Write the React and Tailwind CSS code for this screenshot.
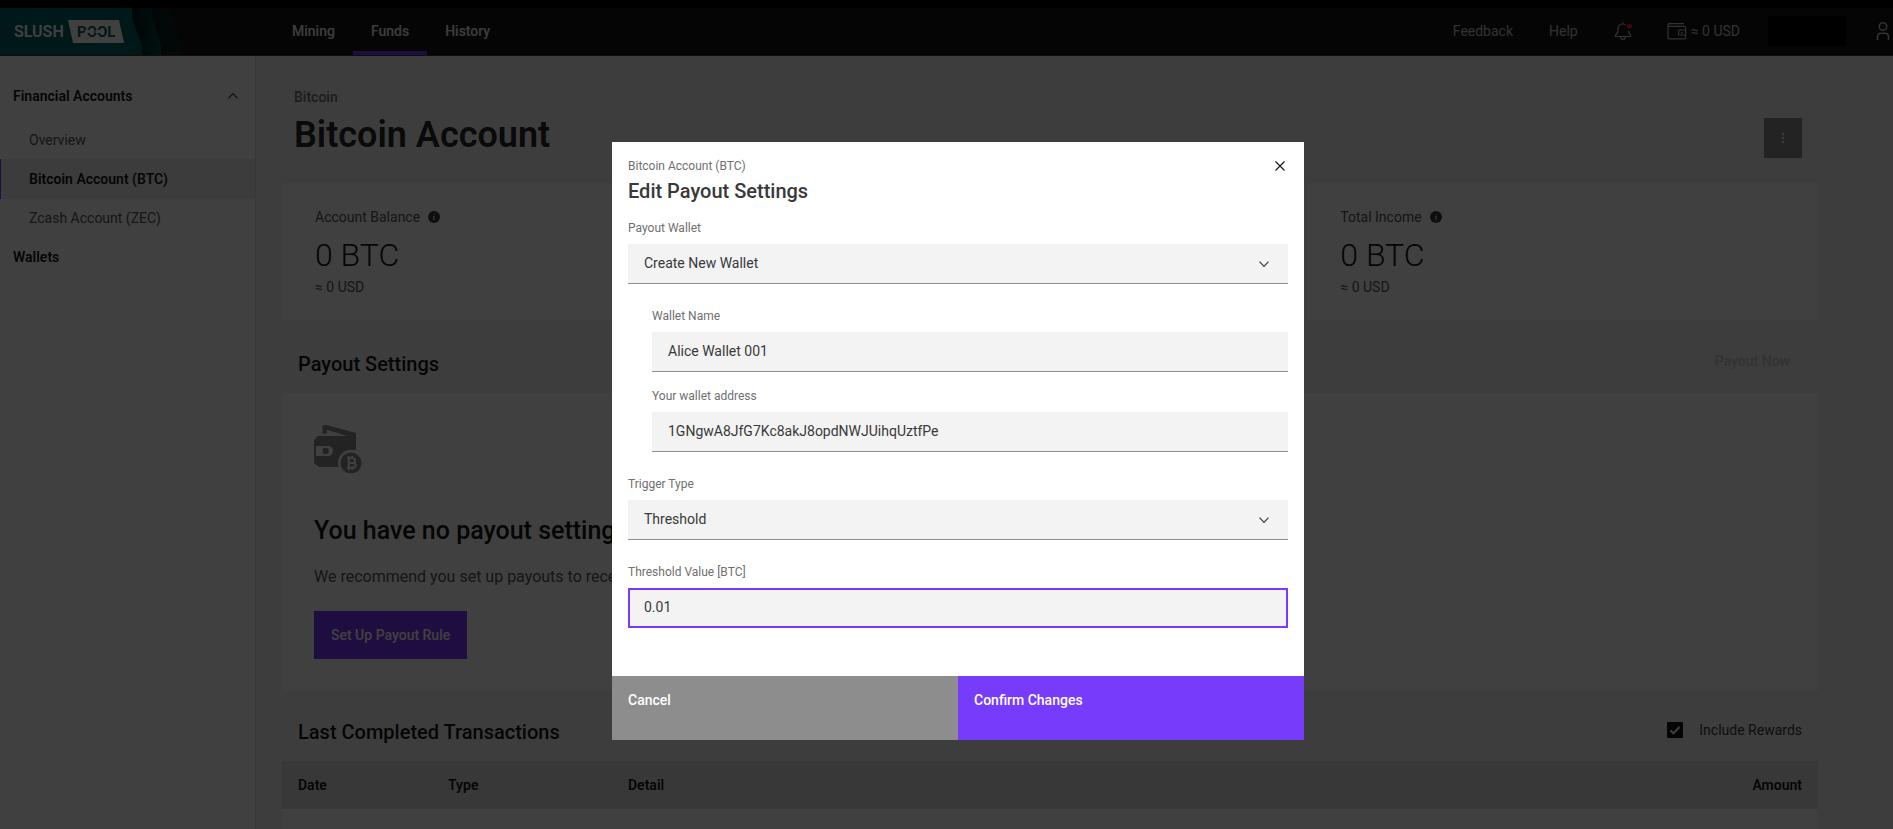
import React from "react";

function Logo() {
  return (
    <svg viewBox="0 0 182 47" className="h-[47px] w-[182px] shrink-0" role="img" aria-label="Slush Pool">
      <defs>
        <linearGradient id="fold1" x1="0" x2="1" y1="0" y2="0">
          <stop offset="0.2" stopColor="#001c1c" />
          <stop offset="1" stopColor="#004a48" />
        </linearGradient>
        <linearGradient id="fold2" x1="0" x2="1" y1="0" y2="0">
          <stop offset="0.3" stopColor="#0c1414" />
          <stop offset="1" stopColor="#062827" />
        </linearGradient>
      </defs>
      <path d="M130 0H171V10L181 40V47H130Z" fill="url(#fold2)" />
      <path d="M130 0H152V10L161 38V47H130Z" fill="url(#fold1)" />
      <path d="M0 0H132V10L142 38V47H0Z" fill="#00605c" />
      <path d="M68 12H119L124 35H73Z" fill="#ffffff" />
      <text x="14" y="29" fill="#ffffff" fontSize="16" fontWeight="600" fontFamily="Roboto, sans-serif">SLUSH</text>
      <text x="77" y="29" fill="#00605c" fontSize="15" fontWeight="700" fontFamily="Roboto, sans-serif">POOL</text>
      <path d="M85 22H90V25H85ZM95.500 22H100.500V25H95.500Z" fill="#ffffff" />
    </svg>
  );
}

function BellIcon() {
  return (
    <svg viewBox="0 0 18 20" className="h-5 w-[18px]" fill="none" stroke="#c6c6c6" strokeWidth="1.200">
      <path d="M9 1.500V3M11.500 3.700C10.700 3.200 9.800 3 9 3C6 3 4 5.200 4 8.200V11L1.500 14V15.500H16.500V14L14.600 11.500V9.500" />
      <path d="M6.500 15.800C6.700 17.300 7.700 18.300 9 18.300C10.300 18.300 11.300 17.300 11.500 15.800" />
      <circle cx="15.500" cy="5.200" r="2.500" fill="#e0302e" stroke="none" />
    </svg>
  );
}

function HeaderWalletIcon() {
  return (
    <svg viewBox="0 0 20 18" className="h-[18px] w-5" fill="none" stroke="#c6c6c6" strokeWidth="1.200">
      <path d="M17 1.600H2.500C1.600 1.600 1 2.200 1 3V15.500C1 16.200 1.500 16.800 2.300 16.800H17.500C18.200 16.800 18.600 16.400 18.600 15.700V5.500C18.600 4.800 18.200 4.400 17.500 4.400H1.500" />
      <path d="M18.600 8H12.500C12 8 11.600 8.400 11.600 9V12C11.600 12.600 12 13 12.500 13H18.600" />
      <rect x="14" y="10" width="1.500" height="1.500" fill="#c6c6c6" stroke="none" />
    </svg>
  );
}

function UserIcon() {
  return (
    <svg viewBox="0 0 16 20" className="h-5 w-4" fill="none" stroke="#c6c6c6" strokeWidth="1.500">
      <circle cx="8" cy="5.500" r="3.800" />
      <path d="M2.500 19V16C2.500 13.800 4 12.300 6 12.300H10C12 12.300 13.500 13.800 13.500 16V19" />
    </svg>
  );
}

function Chevron({ up = false, className = "" }) {
  return (
    <svg viewBox="0 0 12 8" className={"h-2 w-3 " + className} fill="none" stroke="#393939" strokeWidth="1.200" aria-hidden="true">
      <path d={up ? "M1.500 6.300L6 1.700L10.500 6.300" : "M1.500 1.700L6 6.300L10.500 1.700"} />
    </svg>
  );
}

function InfoIcon() {
  return (
    <svg viewBox="0 0 12 12" className="h-3 w-3" aria-hidden="true">
      <circle cx="6" cy="6" r="6" fill="#393939" />
      <path d="M6.200 3H7.200M5.200 5.300H6.300L5.600 8.700H6.600" stroke="#ffffff" strokeWidth="0.900" fill="none" />
    </svg>
  );
}

function PayoutWalletIcon() {
  return (
    <svg viewBox="0 0 48 48" className="h-12 w-12" fill="#8d8d8d" aria-hidden="true">
      <path d="M8.500 0H12.500L42 8V25.300A14 14 0 0 0 24 37.500C24 39 24.200 40.600 24.700 42H5L0 38V15L4 11H33L13 4.800V8.500H8.500Z" />
      <path d="M2 21H14A5 5 0 0 1 14 31H2Z" fill="#ffffff" />
      <circle cx="11.700" cy="26" r="3.200" />
      <circle cx="37" cy="38" r="13" fill="#ffffff" />
      <circle cx="37" cy="38" r="10.500" />
      <path d="M34.800 31V45M38.300 31V33.500M38.300 43V45M33 33.300H38.300C42 33.300 42 37.900 38.500 37.900H35M38.500 37.900C42.800 37.900 42.800 42.800 38.500 42.800H33" fill="none" stroke="#ffffff" strokeWidth="2" />
    </svg>
  );
}

const tabs = ["Mining", "Funds", "History"];

function Header() {
  return (
    <header className="flex h-12 items-stretch border-b border-[#393939] bg-[#171717] pr-[2px] text-sm font-medium">
      <a href="#home" className="mr-[92px]"><Logo /></a>
      <nav className="flex">
        {tabs.map((tab) => (
          <a
            key={tab}
            href={"#" + tab.toLowerCase()}
            className={
              tab === "Funds"
                ? "flex items-center border-b-4 border-[#773bfc] px-[18px] pt-[2px] text-[#f3f3f3]"
                : "flex items-center px-[18px] pb-[2px] text-[#f3f3f3]"
            }
          >
            {tab}
          </a>
        ))}
      </nav>
      <div className="ml-auto flex items-center pb-[2px] font-normal text-[#c6c6c6]">
        <a href="#feedback" className="mr-9">Feedback</a>
        <a href="#help" className="mr-9">Help</a>
        <button type="button" aria-label="Notifications" className="mr-[35px]"><BellIcon /></button>
        <a href="#wallet" className="mr-7 flex items-center gap-1"><HeaderWalletIcon />≈ 0 USD</a>
        <span className="mr-[29px] h-[30px] w-[78px] bg-black" />
        <button type="button" aria-label="User"><UserIcon /></button>
      </div>
    </header>
  );
}

function Sidebar() {
  return (
    <aside className="w-64 shrink-0 border-r border-[#e0e0e0] bg-white pt-4 text-sm">
      <button type="button" className="mx-[13px] flex h-12 w-[226px] items-center justify-between border-t border-[#f7f7f7] pb-[2px] font-semibold text-[#171717]">
        Financial Accounts
        <Chevron up />
      </button>
      <a href="#overview" className="flex h-[39px] items-center pl-[29px] text-[#565656]">Overview</a>
      <a href="#btc" className="flex h-10 items-center border-l border-[#773bfc] bg-[#f0f0f0] pl-7 font-semibold text-[#171717]">Bitcoin Account (BTC)</a>
      <a href="#zec" className="flex h-[38px] items-center pl-[29px] text-[#565656]">Zcash Account (ZEC)</a>
      <a href="#wallets" className="mx-[13px] flex h-10 items-center border-t border-[#f7f7f7] pb-[2px] font-semibold text-[#171717]">Wallets</a>
    </aside>
  );
}

function BalanceCard({ label }) {
  return (
    <section className="bg-white px-[33px] pt-6 pb-[23px]">
      <h3 className="flex items-center gap-2 text-sm leading-5 text-[#565656]">{label}<InfoIcon /></h3>
      <p className="mt-2 text-[32px] leading-10 font-light text-[#171717]">0 BTC</p>
      <p className="mt-[2px] text-sm leading-5 text-[#565656]">≈ 0 USD</p>
    </section>
  );
}

function Main() {
  return (
    <main className="min-w-0 flex-1 pt-[31px] pr-[75px] pl-[26px]">
      <div className="flex items-end justify-between pr-4 pl-3">
        <div>
          <p className="text-sm leading-5 font-medium text-[#6f6f6f]">Bitcoin</p>
          <h1 className="mt-[6px] mb-px text-4xl leading-11 font-semibold text-[#2b2b2b]">Bitcoin Account</h1>
        </div>
        <button type="button" aria-label="More options" className="flex h-10 w-[38px] items-center justify-center bg-[#8d8d8d]">
          <svg viewBox="0 0 4 12" className="h-3 w-1" fill="#f3f3f3">
            <circle cx="2" cy="2" r="1.200" />
            <circle cx="2" cy="6" r="1.200" />
            <circle cx="2" cy="10" r="1.200" />
          </svg>
        </button>
      </div>

      <div className="mt-[25px] grid grid-cols-3 gap-[2px]">
        <BalanceCard label="Account Balance" />
        <div className="bg-white" />
        <BalanceCard label="Total Income" />
      </div>

      <div className="flex h-[73px] items-start justify-between px-4 pt-[21px]">
        <h2 className="text-xl leading-[46px] font-medium text-[#171717]">Payout Settings</h2>
        <button type="button" disabled className="h-10 px-3 text-sm font-medium text-[#c6c6c6]">Payout Now</button>
      </div>

      <section className="bg-white p-8">
        <PayoutWalletIcon />
        <h2 className="mt-[42px] text-[25px] leading-8 font-medium text-[#171717]">You have no payout settings</h2>
        <p className="mt-[18px] text-base leading-6 text-[#565656]">We recommend you set up payouts to receive rewards</p>
        <button type="button" className="mt-[22px] block h-12 bg-[#773bfc] px-[17px] text-sm font-medium text-white">Set Up Payout Rule</button>
      </section>

      <div className="flex h-[70px] items-center justify-between px-4 pt-3">
        <h2 className="text-xl leading-7 font-medium text-[#171717]">Last Completed Transactions</h2>
        <label className="flex items-center gap-4 pb-1 text-sm text-[#393939]">
          <span className="relative flex">
            <input type="checkbox" defaultChecked className="h-4 w-4 appearance-none rounded-[1px] bg-[#171717]" />
            <svg viewBox="0 0 16 16" className="pointer-events-none absolute inset-0 h-4 w-4" fill="none" stroke="#ffffff" strokeWidth="2" aria-hidden="true">
              <path d="M3.500 8.500L6.500 11.300L12.500 5" />
            </svg>
          </span>
          Include Rewards
        </label>
      </div>

      <table className="w-full table-fixed text-left text-sm text-[#171717]">
        <thead>
          <tr className="h-12 bg-[#e0e0e0]">
            <th className="w-[150px] pl-4 font-semibold">Date</th>
            <th className="w-[180px] pl-4 font-semibold">Type</th>
            <th className="pl-4 font-semibold">Detail</th>
            <th className="pr-4 text-right font-semibold">Amount</th>
          </tr>
        </thead>
        <tbody>
          <tr className="h-12 bg-white">
            <td colSpan={4} />
          </tr>
        </tbody>
      </table>
    </main>
  );
}

function Label({ htmlFor, children }) {
  return <label htmlFor={htmlFor} className="mb-2 block text-xs leading-4 text-[#6f6f6f]">{children}</label>;
}

function SelectField({ id, label, value }) {
  return (
    <div>
      <Label htmlFor={id}>{label}</Label>
      <div className="relative">
        <select id={id} defaultValue={value} className="block h-10 w-full appearance-none rounded-none border-b border-[#8d8d8d] bg-[#f3f3f3] px-4 pb-[2px] text-sm text-[#393939]">
          <option>{value}</option>
        </select>
        <Chevron className="pointer-events-none absolute top-4 right-[18px]" />
      </div>
    </div>
  );
}

function TextField({ id, label, value, active = false }) {
  return (
    <div>
      <Label htmlFor={id}>{label}</Label>
      <input
        id={id}
        type="text"
        defaultValue={value}
        className={
          active
            ? "block h-10 w-full border-2 border-[#773bfc] bg-[#f3f3f3] px-[14px] pb-[2px] text-sm text-[#393939] outline-none"
            : "block h-10 w-full border-b border-[#8d8d8d] bg-[#f3f3f3] px-4 pb-[2px] text-sm text-[#393939] outline-none"
        }
      />
    </div>
  );
}

function PayoutDialog() {
  return (
    <div className="fixed inset-0 flex items-start justify-center bg-black/75 pt-[142px] pl-[23px]">
      <div role="dialog" aria-modal="true" aria-labelledby="dialog-title" className="w-full max-w-[692px] bg-white">
        <div className="flex items-start justify-between px-4 pt-4">
          <div>
            <p className="text-xs leading-4 text-[#6f6f6f]">Bitcoin Account (BTC)</p>
            <h2 id="dialog-title" className="mt-[3px] text-xl leading-7 font-medium text-[#393939]">Edit Payout Settings</h2>
          </div>
          <button type="button" aria-label="Close" className="flex h-4 w-4 items-center justify-center">
            <svg viewBox="0 0 12 12" className="h-3 w-3" fill="none" stroke="#171717" strokeWidth="1.200">
              <path d="M1.500 1.500L10.500 10.500M10.500 1.500L1.500 10.500" />
            </svg>
          </button>
        </div>
        <form className="flex flex-col gap-6 px-4 pt-[15px] pb-12">
          <SelectField id="payout-wallet" label="Payout Wallet" value="Create New Wallet" />
          <div className="flex flex-col gap-4 pl-6">
            <TextField id="wallet-name" label="Wallet Name" value="Alice Wallet 001" />
            <TextField id="wallet-address" label="Your wallet address" value="1GNgwA8JfG7Kc8akJ8opdNWJUihqUztfPe" />
          </div>
          <SelectField id="trigger-type" label="Trigger Type" value="Threshold" />
          <TextField id="threshold" label="Threshold Value [BTC]" value="0.01" active />
        </form>
        <div className="grid h-16 grid-cols-2 text-sm font-medium text-white">
          <button type="button" className="flex bg-[#8d8d8d] px-4 pt-[14px] text-left">Cancel</button>
          <button type="button" className="flex bg-[#773bfc] px-4 pt-[14px] text-left">Confirm Changes</button>
        </div>
      </div>
    </div>
  );
}

export default function App() {
  return (
    <div className="flex h-screen flex-col overflow-hidden border-t-8 border-black bg-[#f3f3f3] font-['Roboto','Noto_Sans',sans-serif]">
      <Header />
      <div className="flex flex-1">
        <Sidebar />
        <Main />
      </div>
      <PayoutDialog />
    </div>
  );
}
